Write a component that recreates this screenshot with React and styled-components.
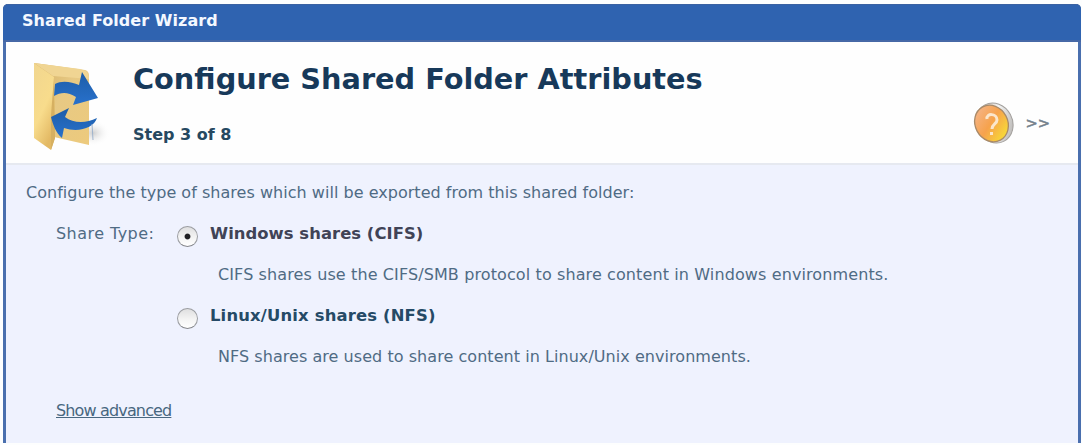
import React, { useState } from "react";
import styled, { createGlobalStyle } from "styled-components";

const GlobalStyle = createGlobalStyle`
  body {
    margin: 0;
    background: #fdfefe;
    font-family: "DejaVu Sans", Verdana, sans-serif;
    font-size: 16px;
    line-height: 20px;
    overflow: hidden;
  }
`;

const Wizard = styled.div`
  box-sizing: border-box;
  width: 1078px;
  height: 439px;
  margin: 4px 0 0 3px;
  display: flex;
  flex-direction: column;
  border: solid #4a6fae;
  border-width: 0 3px;
  border-radius: 5px 5px 0 0;
  background: #eff2fe;
`;

const TitleBar = styled.div`
  box-sizing: border-box;
  height: 38px;
  margin: 0 -3px;
  padding: 6px 0 0 19px;
  border-top: 1px solid #3a62a2;
  border-bottom: 2px solid #4668a6;
  border-radius: 5px 5px 0 0;
  background: #2f63b0;
  color: #f4f8ff;
  font-weight: bold;
  letter-spacing: 0.06px;
`;

const Header = styled.header`
  box-sizing: border-box;
  height: 123px;
  display: flex;
  background: #fefefe;
  border-bottom: 2px solid #e6e9f0;
`;

const FolderIcon = styled.svg`
  width: 86px;
  height: 100px;
  margin: 13px 0 0 22px;
`;

const Heading = styled.div`
  flex: 1;
  padding: 17px 0 0 19px;
  color: #17395a;
`;

const Title = styled.h1`
  margin: 0 0 26px;
  font-size: 28.75px;
  line-height: 40px;
`;

const Step = styled.div`
  color: #264860;
  font-weight: bold;
`;

const Help = styled.div`
  display: flex;
  align-items: center;
  gap: 11px;
  height: 42px;
  margin: 60px 28px 0 0;
  color: #73808c;
  font-size: 14.7px;
  -webkit-text-stroke: 0.5px #73808c;
`;

const HelpIcon = styled.svg`
  width: 42px;
  height: 44px;
`;

const Content = styled.main`
  padding: 18px 20px 0;
  color: #4f6b84;
`;

const Intro = styled.div`
  letter-spacing: 0.03px;
`;

const Field = styled.div`
  display: flex;
  margin: 21px 0 0 30px;
`;

const Label = styled.div`
  width: 121px;
  letter-spacing: 0.45px;
`;

const Option = styled.div`
  margin-bottom: 21px;
`;

const OptionLabel = styled.label`
  display: flex;
  gap: 12px;
  color: ${(p) => (p.$selected ? "#404356" : "#254a66")};
  font-size: 16.4px;
  font-weight: bold;
  letter-spacing: ${(p) => p.$tracking}px;
`;

const Radio = styled.input`
  appearance: none;
  box-sizing: border-box;
  width: 21px;
  height: 21px;
  margin: 2px 0 -3px;
  border: 1px solid #9b9da1;
  border-bottom-color: #85878b;
  border-radius: 50%;
  background: linear-gradient(#dfdfe0, #f4f4f4 55%, #fff);

  &:checked {
    background:
      radial-gradient(circle, #202024 2.4px, transparent 3.4px),
      linear-gradient(#dfdfe0, #f4f4f4 55%, #fff);
  }
`;

const Description = styled.div`
  margin: 21px 0 0 41px;
  letter-spacing: ${(p) => p.$tracking}px;
`;

const AdvancedLink = styled.a`
  display: inline-block;
  margin: 13px 0 0 30px;
  color: #486780;
  letter-spacing: -0.85px;
  text-decoration: underline;
  text-underline-offset: 1px;
`;

const shareTypes = [
  {
    id: "cifs",
    name: "Windows shares (CIFS)",
    text: "CIFS shares use the CIFS/SMB protocol to share content in Windows environments.",
    nameTracking: 0.05,
    textTracking: 0.11,
  },
  {
    id: "nfs",
    name: "Linux/Unix shares (NFS)",
    text: "NFS shares are used to share content in Linux/Unix environments.",
    nameTracking: 0.17,
    textTracking: 0.05,
  },
];

const SharedFolder = () => (
  <FolderIcon viewBox="0 0 86 100">
    <defs>
      <linearGradient id="front" x1="0" y1="0" x2="0.5" y2="1">
        <stop offset="0" stopColor="#f1d68f" />
        <stop offset="0.6" stopColor="#f8dc8c" />
        <stop offset="1" stopColor="#e3b964" />
      </linearGradient>
      <linearGradient id="back" x1="0" y1="0" x2="1" y2="1">
        <stop offset="0" stopColor="#d2ad60" />
        <stop offset="0.45" stopColor="#e7c984" />
        <stop offset="1" stopColor="#edca7c" />
      </linearGradient>
      <linearGradient id="arrow" x1="0" y1="0" x2="0" y2="1">
        <stop offset="0" stopColor="#1d5da8" />
        <stop offset="1" stopColor="#2871cc" />
      </linearGradient>
      <radialGradient id="shade">
        <stop offset="0" stopColor="#cfcfcf" />
        <stop offset="1" stopColor="#fefefe" stopOpacity="0" />
      </radialGradient>
    </defs>
    <ellipse cx="65" cy="78" rx="17" ry="13" fill="url(#shade)" />
    <path d="M6 8 L57 15 Q61 16 61 21 L61 90 L26 82 Z" fill="url(#back)" />
    <path d="M6 8 L52 14 L58 16 Q61 18 61 24 L25 21 Z" fill="#f0d593" />
    <path d="M6 8 L26 22 L27 83 L23 95 L6 83 Z" fill="url(#front)" />
    <path d="M26 22 L27 83 L23 95 L23 60 Z" fill="#d6b061" />
    <path
      d="M27 29 C34 25 44 27 51 30 L54 17 L70 43 L45 50 L48 42 C40 37 33 37 26 41 Z"
      fill="url(#arrow)"
    />
    <path
      d="M23 62 L41 53 L37 62 C45 68 57 69 69 63 C66 73 50 78 36 73 L34 83 C28 78 25 70 23 62 Z"
      fill="url(#arrow)"
    />
    <path d="M64 69 L65 85" stroke="#9fb4cd" strokeWidth="1" />
  </FolderIcon>
);

const QuestionBadge = () => (
  <HelpIcon viewBox="0 0 42 44">
    <defs>
      <linearGradient id="rim" x1="0" y1="0" x2="1" y2="1">
        <stop offset="0" stopColor="#a98d77" />
        <stop offset="0.5" stopColor="#f4f4f4" />
        <stop offset="1" stopColor="#aaa7a4" />
      </linearGradient>
      <linearGradient id="face" x1="0.2" y1="0" x2="0.7" y2="1">
        <stop offset="0" stopColor="#f5b58a" />
        <stop offset="0.5" stopColor="#f6a24c" />
        <stop offset="1" stopColor="#f8dd35" />
      </linearGradient>
    </defs>
    <ellipse
      cx="22.5"
      cy="22"
      rx="18"
      ry="20.5"
      fill="url(#rim)"
      stroke="#a3a09d"
      strokeWidth="1"
      transform="rotate(-28 22.5 22)"
    />
    <ellipse
      cx="19.5"
      cy="22.5"
      rx="16.3"
      ry="18.8"
      fill="url(#face)"
      stroke="#a98a68"
      strokeWidth="1.3"
      transform="rotate(-28 19.5 22.5)"
    />
    <path
      d="M15 18 C14 12 25 12 25 19 C25 23 20 23 20 28 M19.5 31 L19.5 34"
      fill="none"
      stroke="#fbe6cc"
      strokeWidth="3"
    />
  </HelpIcon>
);

const App = () => {
  const [selected, setSelected] = useState("cifs");

  return (
    <>
      <GlobalStyle />
      <Wizard>
        <TitleBar>Shared Folder Wizard</TitleBar>
        <Header>
          <SharedFolder />
          <Heading>
            <Title>Configure Shared Folder Attributes</Title>
            <Step>Step 3 of 8</Step>
          </Heading>
          <Help>
            <QuestionBadge />
            <span>&gt;&gt;</span>
          </Help>
        </Header>
        <Content>
          <Intro>
            Configure the type of shares which will be exported from this shared
            folder:
          </Intro>
          <Field>
            <Label>Share Type:</Label>
            <div>
              {shareTypes.map((type) => (
                <Option key={type.id}>
                  <OptionLabel
                    $selected={selected === type.id}
                    $tracking={type.nameTracking}
                  >
                    <Radio
                      type="radio"
                      name="shareType"
                      checked={selected === type.id}
                      onChange={() => setSelected(type.id)}
                    />
                    {type.name}
                  </OptionLabel>
                  <Description $tracking={type.textTracking}>
                    {type.text}
                  </Description>
                </Option>
              ))}
            </div>
          </Field>
          <AdvancedLink>Show advanced</AdvancedLink>
        </Content>
      </Wizard>
    </>
  );
};

export default App;
